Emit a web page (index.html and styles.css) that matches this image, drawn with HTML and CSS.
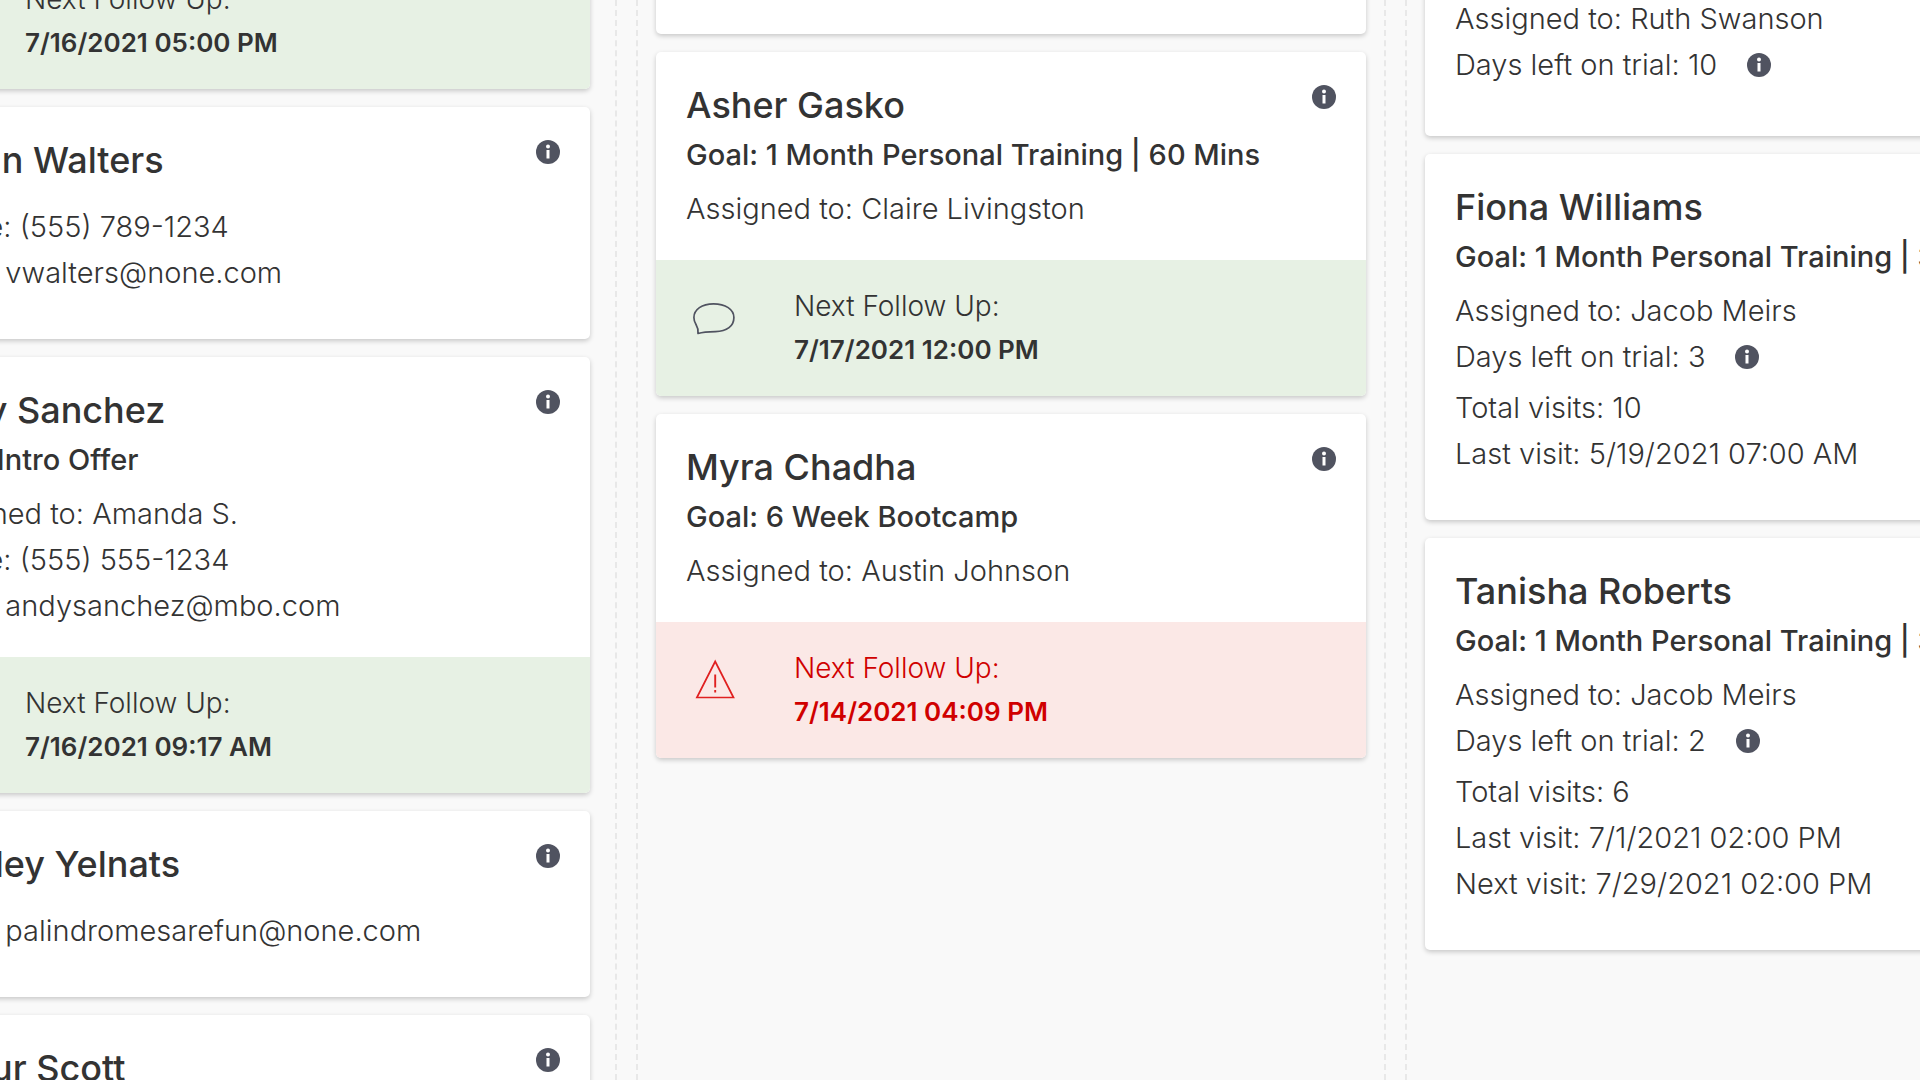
FILE: index.html
```html
<!DOCTYPE html>
<html lang="en">
<head>
  <meta charset="UTF-8">
  <meta name="viewport" content="width=device-width, initial-scale=1">
  <title>Client pipeline</title>
  <link rel="stylesheet" href="styles.css">
</head>
<body>
  <!-- shared icons -->
  <svg class="sprite" aria-hidden="true">
    <symbol id="icon-info" viewBox="0 0 24 24">
      <circle cx="12" cy="12" r="12" fill="currentColor"/>
      <circle cx="12" cy="6.5" r="2" fill="#fff"/>
      <rect x="10.5" y="10" width="3" height="8.5" fill="#fff"/>
    </symbol>
    <symbol id="icon-chat" viewBox="0 0 42 42">
      <path d="M5 36.5C5.500 33 4.800 30.500 3 27.500C1.500 25 .9 23 .9 20.500C.9 12.500 9 6.800 20.500 6.800C32.500 6.800 40.900 12.500 40.900 20.500C40.900 29 34 34.500 22.500 34.600C16 34.700 10.500 34.900 5 36.500Z" fill="none" stroke="currentColor" stroke-width="1.700" stroke-linejoin="round"/>
    </symbol>
    <symbol id="icon-warning" viewBox="0 0 42 42">
      <path d="M22.200 2.500L40.500 38.500H3.900Z" fill="none" stroke="currentColor" stroke-width="1.700"/>
      <path d="M22.200 15.500V28.500M22.200 31V33.500" fill="none" stroke="currentColor" stroke-width="1.900"/>
    </symbol>
  </svg>

  <main class="board">
    <section class="column column-new">
      <div class="card-list">
        <article class="card">
          <div class="card-body">
            <div class="card-head">
              <h2 class="name">Sam Porter</h2>
              <button class="info" aria-label="Client info"><svg><use href="#icon-info"/></svg></button>
            </div>
            <p class="goal">Goal: Intro Offer</p>
            <ul class="details">
              <li>Assigned to: Amanda S.</li>
            </ul>
          </div>
          <div class="follow-up">
            <svg class="follow-icon"><use href="#icon-chat"/></svg>
            <div>
              <p class="follow-label">Next Follow Up:</p>
              <p class="follow-date">7/16/2021 05:00 PM</p>
            </div>
          </div>
        </article>

        <article class="card">
          <div class="card-body">
            <div class="card-head">
              <h2 class="name">Vivian Walters</h2>
              <button class="info" aria-label="Client info"><svg><use href="#icon-info"/></svg></button>
            </div>
            <ul class="details">
              <li>Phone: (555) 789-1234</li>
              <li>Email: vwalters@none.com</li>
            </ul>
          </div>
        </article>

        <article class="card">
          <div class="card-body">
            <div class="card-head">
              <h2 class="name">Andy Sanchez</h2>
              <button class="info" aria-label="Client info"><svg><use href="#icon-info"/></svg></button>
            </div>
            <p class="goal">Goal: Intro Offer</p>
            <ul class="details">
              <li>Assigned to: Amanda S.</li>
              <li>Phone: (555) 555-1234</li>
              <li>Email: andysanchez@mbo.com</li>
            </ul>
          </div>
          <div class="follow-up">
            <svg class="follow-icon"><use href="#icon-chat"/></svg>
            <div>
              <p class="follow-label">Next Follow Up:</p>
              <p class="follow-date">7/16/2021 09:17 AM</p>
            </div>
          </div>
        </article>

        <article class="card">
          <div class="card-body">
            <div class="card-head">
              <h2 class="name">Stanley Yelnats</h2>
              <button class="info" aria-label="Client info"><svg><use href="#icon-info"/></svg></button>
            </div>
            <ul class="details">
              <li>Email: palindromesarefun@none.com</li>
            </ul>
          </div>
        </article>

        <article class="card">
          <div class="card-body">
            <div class="card-head">
              <h2 class="name">Arthur Scott</h2>
              <button class="info" aria-label="Client info"><svg><use href="#icon-info"/></svg></button>
            </div>
          </div>
        </article>
      </div>
    </section>

    <section class="column column-goal">
      <div class="card-list">
        <article class="card">
          <div class="card-body">
            <div class="card-head">
              <h2 class="name">Lena Ortiz</h2>
              <button class="info" aria-label="Client info"><svg><use href="#icon-info"/></svg></button>
            </div>
            <p class="goal">Goal: 6 Week Bootcamp</p>
            <ul class="details">
              <li>Assigned to: Austin Johnson</li>
            </ul>
          </div>
        </article>

        <article class="card">
          <div class="card-body">
            <div class="card-head">
              <h2 class="name">Asher Gasko</h2>
              <button class="info" aria-label="Client info"><svg><use href="#icon-info"/></svg></button>
            </div>
            <p class="goal">Goal: 1 Month Personal Training | 60 Mins</p>
            <ul class="details">
              <li>Assigned to: Claire Livingston</li>
            </ul>
          </div>
          <div class="follow-up">
            <svg class="follow-icon"><use href="#icon-chat"/></svg>
            <div>
              <p class="follow-label">Next Follow Up:</p>
              <p class="follow-date">7/17/2021 12:00 PM</p>
            </div>
          </div>
        </article>

        <article class="card">
          <div class="card-body">
            <div class="card-head">
              <h2 class="name">Myra Chadha</h2>
              <button class="info" aria-label="Client info"><svg><use href="#icon-info"/></svg></button>
            </div>
            <p class="goal">Goal: 6 Week Bootcamp</p>
            <ul class="details">
              <li>Assigned to: Austin Johnson</li>
            </ul>
          </div>
          <div class="follow-up overdue">
            <svg class="follow-icon"><use href="#icon-warning"/></svg>
            <div>
              <p class="follow-label">Next Follow Up:</p>
              <p class="follow-date">7/14/2021 04:09 PM</p>
            </div>
          </div>
        </article>
      </div>
    </section>

    <section class="column column-trial">
      <div class="card-list">
        <article class="card">
          <div class="card-body">
            <div class="card-head">
              <h2 class="name">Noah Grant</h2>
              <button class="info" aria-label="Client info"><svg><use href="#icon-info"/></svg></button>
            </div>
            <p class="goal">Goal: Intro Offer</p>
            <ul class="details">
              <li>Assigned to: Ruth Swanson</li>
              <li class="trial">Days left on trial: 10 <button class="info" aria-label="Trial info"><svg><use href="#icon-info"/></svg></button></li>
            </ul>
          </div>
        </article>

        <article class="card">
          <div class="card-body">
            <div class="card-head">
              <h2 class="name">Fiona Williams</h2>
              <button class="info" aria-label="Client info"><svg><use href="#icon-info"/></svg></button>
            </div>
            <p class="goal">Goal: 1 Month Personal Training | 30 Mins</p>
            <ul class="details">
              <li>Assigned to: Jacob Meirs</li>
              <li class="trial">Days left on trial: 3 <button class="info" aria-label="Trial info"><svg><use href="#icon-info"/></svg></button></li>
              <li>Total visits: 10</li>
              <li>Last visit: 5/19/2021 07:00 AM</li>
            </ul>
          </div>
        </article>

        <article class="card">
          <div class="card-body">
            <div class="card-head">
              <h2 class="name">Tanisha Roberts</h2>
              <button class="info" aria-label="Client info"><svg><use href="#icon-info"/></svg></button>
            </div>
            <p class="goal">Goal: 1 Month Personal Training | 30 Mins</p>
            <ul class="details">
              <li>Assigned to: Jacob Meirs</li>
              <li class="trial">Days left on trial: 2 <button class="info" aria-label="Trial info"><svg><use href="#icon-info"/></svg></button></li>
              <li>Total visits: 6</li>
              <li>Last visit: 7/1/2021 02:00 PM</li>
              <li>Next visit: 7/29/2021 02:00 PM</li>
            </ul>
          </div>
        </article>
      </div>
    </section>
  </main>
</body>
</html>
```
FILE: styles.css
```css
* {
  box-sizing: border-box;
}

body {
  margin: 0;
  overflow: hidden;
  font-family: Inter, "Open Sans", sans-serif;
  font-weight: 300;
  color: #333;
  background-color: #f9f9f9;
}

h2, p, ul {
  margin: 0;
  padding: 0;
}

.sprite {
  display: none;
}

/* the board is wider than the window and sits scrolled to the middle */
.board {
  display: grid;
  grid-template-columns: repeat(3, 1fr);
  gap: 19px;
  height: 100vh;
  margin: 0 -235px 0 -133px;
}

.column {
  min-width: 0;
  overflow: hidden;
  padding: 0 18px;
  border-left: 2px dashed #e8e8e8;
  border-right: 2px dashed #e8e8e8;
}

.card-list {
  display: flex;
  flex-direction: column;
  gap: 18px;
}

/* each column has its own scroll position */
.column-new {
  padding-right: 25px;
}

.column-new .card-list {
  margin-top: -255px;
}

.column-goal .card-list {
  margin-top: -189px;
}

.column-trial .card-list {
  margin-top: -138px;
}

.card {
  background-color: #fff;
  border-radius: 5px;
  box-shadow: 0 2px 5px rgba(0, 0, 0, 0.2);
}

.card-body {
  padding: 28px 30px 43px;
}

.card-body:not(:last-child) {
  padding-bottom: 28px;
}

.card-head {
  display: flex;
  justify-content: space-between;
  align-items: flex-start;
}

.name {
  font-size: 36px;
  line-height: 50px;
  font-weight: 500;
}

.info {
  flex: none;
  width: 24px;
  height: 24px;
  padding: 0;
  border: none;
  background: none;
  color: #505360;
  cursor: pointer;
}

.info svg {
  display: block;
  width: 24px;
  height: 24px;
}

.card-head .info {
  margin-top: 5px;
}

.goal {
  font-size: 29px;
  line-height: 50px;
  font-weight: 500;
  white-space: nowrap;
}

.details {
  margin-top: 19px;
  list-style: none;
  font-size: 29px;
  line-height: 46px;
  white-space: nowrap;
}

.goal + .details {
  margin-top: 6px;
}

.trial {
  display: flex;
  align-items: center;
  gap: 30px;
  margin-bottom: 5px;
}

.follow-up {
  display: flex;
  gap: 59px;
  padding: 25px 37px;
  border-radius: 0 0 5px 5px;
  background-color: #e7f1e4;
}

.follow-icon {
  flex: none;
  width: 42px;
  height: 42px;
  margin-top: 12px;
  color: #505360;
}

.follow-label {
  font-size: 28px;
  line-height: 43px;
}

.follow-date {
  font-size: 26px;
  line-height: 43px;
  font-weight: 600;
}

.overdue {
  background-color: #fbe8e6;
  color: #d00000;
}

.overdue .follow-icon {
  color: #e02020;
}
```
